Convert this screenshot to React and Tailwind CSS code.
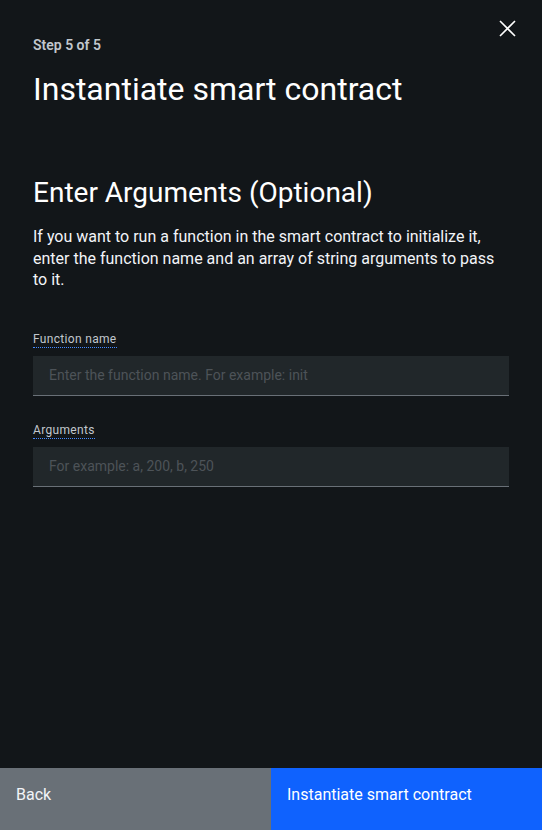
import React from 'react';

const Field = ({ label, placeholder }) => (
  <div className="flex flex-col">
    <label className="self-start text-[12px] leading-4 text-[#c1c7cd] border-b border-dotted border-[#4589ff] tracking-[0.32px]">
      {label}
    </label>
    <input
      type="text"
      placeholder={placeholder}
      className="mt-2 h-10 w-full bg-[#21272a] border-b border-[#697077] px-4 text-[14px] text-white placeholder:text-[#4d5358] outline-none"
    />
  </div>
);

const App = () => {
  return (
    <div className="w-[542px] h-[830px] bg-[#121619] flex flex-col" style={{ fontFamily: 'Roboto, "Noto Sans", sans-serif' }}>
      <div className="relative flex-1 px-[33px] pr-[33px]">
        <button className="absolute left-[499px] top-[20px] text-white">
          <svg width="17" height="17" viewBox="0 0 17 17" fill="none" stroke="currentColor" strokeWidth="1.6">
            <path d="M1 1L16 16M16 1L1 16" />
          </svg>
        </button>

        <p className="pt-[36px] text-[14px] leading-[18px] font-semibold text-[#c1c7cd]">Step 5 of 5</p>
        <h1 className="mt-[15px] text-[32px] leading-[40px] font-normal text-white">Instantiate smart contract</h1>

        <h2 className="mt-[66px] text-[28px] leading-9 font-normal text-white">Enter Arguments (Optional)</h2>
        <p className="mt-[15px] text-[16px] leading-[21.5px] text-[#f2f4f8]">
          If you want to run a function in the smart contract to initialize it, enter the function name and an array of string arguments to pass to it.
        </p>

        <div className="mt-[40px] flex flex-col gap-[26px]">
          <Field label="Function name" placeholder="Enter the function name. For example: init" />
          <Field label="Arguments" placeholder="For example: a, 200, b, 250" />
        </div>
      </div>

      <div className="flex h-[62px]">
        <button className="w-[271px] bg-[#697077] text-left pl-4 pb-[8px] text-[16px] text-[#f2f4f8]">Back</button>
        <button className="flex-1 bg-[#0f62fe] text-left pl-4 pb-[8px] text-[16px] text-white">Instantiate smart contract</button>
      </div>
    </div>
  );
};

export default App;
